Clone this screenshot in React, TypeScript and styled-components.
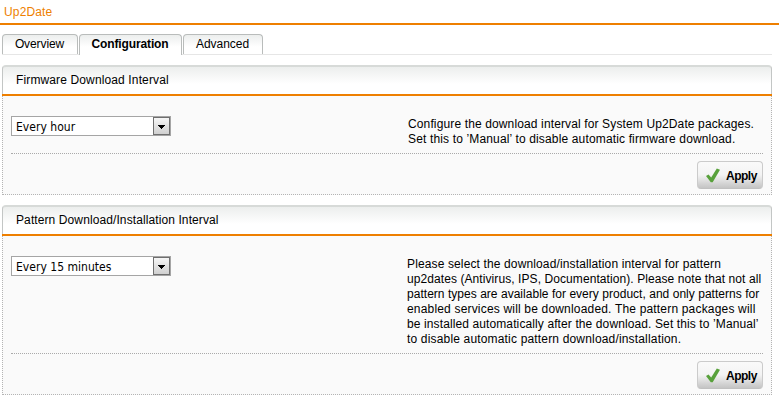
import React from 'react';
import styled, { createGlobalStyle } from 'styled-components';

const GlobalStyle = createGlobalStyle`
  *, *::before, *::after { box-sizing: border-box; }
  body {
    margin: 0;
    background: #fff;
    color: #000;
    font: 12px/15px Arial, "Liberation Sans", sans-serif;
  }
`;

const Page = styled.main`
  width: 779px;
  height: 413px;
  overflow: hidden;
`;

const PageTitle = styled.h1`
  margin: 0;
  height: 25px;
  padding: 5px 0 0 4px;
  border-bottom: 2px solid #ee7f00;
  color: #ee7f00;
  font-size: 12px;
  font-weight: 400;
  line-height: 14px;
  letter-spacing: 0.15px;
`;

const TabBar = styled.nav`
  display: flex;
  gap: 1px;
  height: 21px;
  margin: 9px 7px 0 2px;
  box-shadow: inset 0 -1px #e6e6e6;
`;

const Tab = styled.button<{ $width: number; $active?: boolean; $tracking?: number }>`
  display: flex;
  justify-content: center;
  width: ${(p) => p.$width}px;
  height: ${(p) => (p.$active ? 21 : 20)}px;
  padding: 0 1px 0 0;
  border: 1px solid #b9bcbb;
  border-bottom: 0;
  border-radius: 4px 4px 0 0;
  background: linear-gradient(#eceeed, #fff 12px);
  color: #000;
  font: ${(p) => (p.$active ? 700 : 400)} 12px/18px Arial, "Liberation Sans", sans-serif;
  letter-spacing: ${(p) => p.$tracking ?? 0}px;
  white-space: nowrap;
`;

const Panel = styled.section<{ $height: number }>`
  display: flex;
  flex-direction: column;
  width: 770px;
  height: ${(p) => p.$height}px;
  margin: 10px 0 0 2px;
`;

const PanelHeader = styled.h2<{ $tracking?: number }>`
  flex: none;
  height: 29px;
  margin: 0;
  padding: 6px 0 0 13px;
  border: 1px solid #c3c6c5;
  border-top: 2px solid #d7dad8;
  border-bottom: 0;
  border-radius: 4px 4px 0 0;
  background: linear-gradient(#eceeed, #fff 17px);
  font-size: 12px;
  font-weight: 400;
  line-height: 14px;
  letter-spacing: ${(p) => p.$tracking ?? 0}px;
`;

const HeaderRule = styled.div`
  flex: none;
  height: 2px;
  background: #ee7f00;
`;

const PanelBody = styled.div`
  flex: 1;
  display: flex;
  flex-direction: column;
  padding: 20px 8px 0;
  border: 1px dotted #b4b4b4;
  border-top: 0;
  background: #fafafa;
`;

const Setting = styled.div`
  flex: 1;
  display: flex;
  justify-content: space-between;
  border-bottom: 1px dotted #aaa;
`;

const Picker = styled.button`
  display: flex;
  width: 160px;
  height: 20px;
  padding: 0;
  border: 1px solid #a5a5a5;
  background: #fff;
  color: #000;
`;

const PickerValue = styled.span<{ $tracking?: number }>`
  flex: 1;
  padding: 1px 0 0 4px;
  font: 12px/19px Tahoma, "DejaVu Sans Condensed", "DejaVu Sans", sans-serif;
  letter-spacing: ${(p) => p.$tracking ?? 0}px;
  text-align: left;
  white-space: nowrap;
`;

const PickerArrow = styled.span`
  display: flex;
  align-items: center;
  justify-content: center;
  width: 17px;
  height: 18px;
  padding-top: 2px;
  border: 1px solid #6f6f6f;
  background: linear-gradient(#f6f6f6, #d0d0d0);
`;

const Description = styled.p<{ $width: number }>`
  width: ${(p) => p.$width}px;
  margin: 0;
  padding-top: 1px;
`;

const Line = styled.span<{ $tracking?: number }>`
  display: block;
  letter-spacing: ${(p) => p.$tracking ?? 0}px;
  white-space: nowrap;
`;

const Actions = styled.div`
  display: flex;
  justify-content: flex-end;
  height: 40px;
  padding-top: 7px;
`;

const ApplyButton = styled.button`
  display: flex;
  align-items: center;
  gap: 6px;
  width: 66px;
  height: 28px;
  padding: 0 0 0 8px;
  border: 1px solid #cbcbcb;
  border-bottom-color: #c0c0c0;
  border-radius: 4px;
  background: linear-gradient(#fafafa 0%, #f3f3f3 50%, #c4c4c4 100%);
  color: #000;
  font: 700 12px/15px Arial, "Liberation Sans", sans-serif;
  letter-spacing: -0.5px;
`;

const ApplyLabel = styled.span`
  padding-top: 2px;
`;

const CheckIcon = () => (
  <svg width="14" height="15" viewBox="0 0 14 15" aria-hidden="true">
    <path d="M0 8.1 2.5 6.6 5.2 9.6 10.8 0.4 14 1.7 6.7 14.2 4.8 14.2Z" fill="#58a13b" />
  </svg>
);

const ArrowIcon = () => (
  <svg width="7" height="4" viewBox="0 0 7 4" shapeRendering="crispEdges" aria-hidden="true">
    <path d="M0 0H7V1H6V2H5V3H4V4H3V3H2V2H1V1H0Z" />
  </svg>
);

type Text = { text: string; tracking?: number };

type IntervalPanelProps = {
  title: Text;
  value: Text;
  lines: Text[];
  height: number;
  textWidth: number;
};

const IntervalPanel = ({ title, value, lines, height, textWidth }: IntervalPanelProps) => (
  <Panel $height={height}>
    <PanelHeader $tracking={title.tracking}>{title.text}</PanelHeader>
    <HeaderRule />
    <PanelBody>
      <Setting>
        <Picker type="button" aria-haspopup="listbox">
          <PickerValue $tracking={value.tracking}>{value.text}</PickerValue>
          <PickerArrow><ArrowIcon /></PickerArrow>
        </Picker>
        <Description $width={textWidth}>
          {lines.map((line) => (
            <Line key={line.text} $tracking={line.tracking}>{line.text}</Line>
          ))}
        </Description>
      </Setting>
      <Actions>
        <ApplyButton type="button"><CheckIcon /><ApplyLabel>Apply</ApplyLabel></ApplyButton>
      </Actions>
    </PanelBody>
  </Panel>
);

export default function App() {
  return (
    <>
      <GlobalStyle />
      <Page>
        <PageTitle>Up2Date</PageTitle>
        <TabBar>
          <Tab $width={76} $tracking={-0.1}>Overview</Tab>
          <Tab $width={103} $tracking={-0.12} $active>Configuration</Tab>
          <Tab $width={80} $tracking={-0.04}>Advanced</Tab>
        </TabBar>
        <IntervalPanel
          title={{ text: 'Firmware Download Interval', tracking: 0.13 }}
          value={{ text: 'Every hour', tracking: 0.03 }}
          height={130}
          textWidth={355}
          lines={[
            { text: 'Configure the download interval for System Up2Date packages.', tracking: 0.13 },
            { text: 'Set this to ’Manual’ to disable automatic firmware download.', tracking: 0.15 },
          ]}
        />
        <IntervalPanel
          title={{ text: 'Pattern Download/Installation Interval', tracking: 0.1 }}
          value={{ text: 'Every 15 minutes', tracking: 0.03 }}
          height={190}
          textWidth={356}
          lines={[
            { text: 'Please select the download/installation interval for pattern', tracking: 0.13 },
            { text: 'up2dates (Antivirus, IPS, Documentation). Please note that not all', tracking: 0.08 },
            { text: 'pattern types are available for every product, and only patterns for', tracking: 0.03 },
            { text: 'enabled services will be downloaded. The pattern packages will', tracking: 0.18 },
            { text: 'be installed automatically after the download. Set this to ’Manual’', tracking: 0.11 },
            { text: 'to disable automatic pattern download/installation.', tracking: 0.17 },
          ]}
        />
      </Page>
    </>
  );
}
